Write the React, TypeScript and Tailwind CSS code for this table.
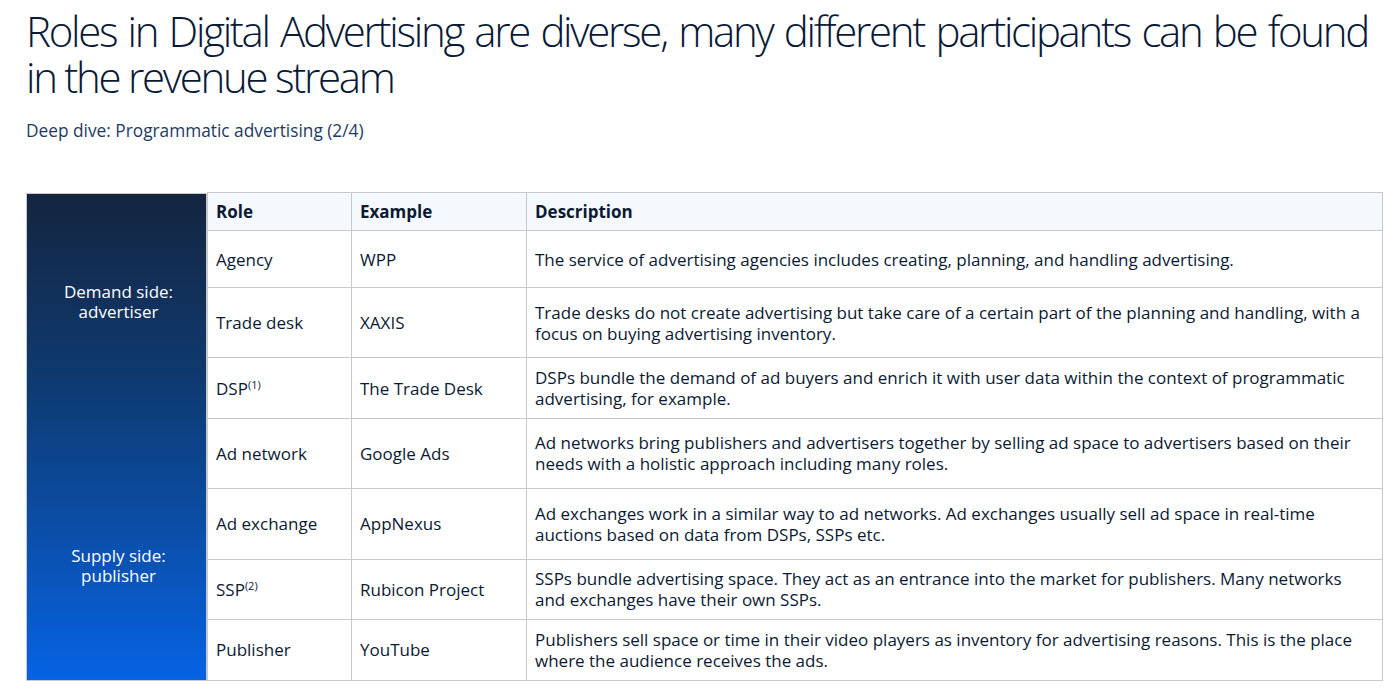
const rows = [
  { role: "Agency", sup: "", ex: "WPP", desc: "The service of advertising agencies includes creating, planning, and handling advertising.", h: "h-[57px]" },
  { role: "Trade desk", sup: "", ex: "XAXIS", desc: "Trade desks do not create advertising but take care of a certain part of the planning and handling, with a focus on buying advertising inventory.", h: "h-[70px]" },
  { role: "DSP", sup: "(1)", ex: "The Trade Desk", desc: "DSPs bundle the demand of ad buyers and enrich it with user data within the context of programmatic advertising, for example.", h: "h-[61px]" },
  { role: "Ad network", sup: "", ex: "Google Ads", desc: "Ad networks bring publishers and advertisers together by selling ad space to advertisers based on their needs with a holistic approach including many roles.", h: "h-[69px]" },
  { role: "Ad exchange", sup: "", ex: "AppNexus", desc: "Ad exchanges work in a similar way to ad networks. Ad exchanges usually sell ad space in real-time auctions based on data from DSPs, SSPs etc.", h: "h-[71px]" },
  { role: "SSP", sup: "(2)", ex: "Rubicon Project", desc: "SSPs bundle advertising space. They act as an entrance into the market for publishers. Many networks and exchanges have their own SSPs.", h: "h-[60px]" },
  { role: "Publisher", sup: "", ex: "YouTube", desc: "Publishers sell space or time in their video players as inventory for advertising reasons. This is the place where the audience receives the ads.", h: "h-[61px]" },
];

export default function App() {
  return (
    <div className="w-[1400px] h-[697px] bg-white text-[#0b1a33] font-['Open_Sans',sans-serif] overflow-hidden">
      <div className="pl-[26px] pr-[32px] pt-[8px]">
        <h1 className="text-[42px] leading-[46px] font-light tracking-[-2.3px] text-justify text-[#0a1a36]">
          Roles in Digital Advertising are diverse, many different participants can be found in the revenue stream
        </h1>
        <p className="mt-[19px] text-[17.3px] leading-[24px] text-[#1d3a63]">
          Deep dive: Programmatic advertising (2/4)
        </p>
      </div>

      <div className="flex ml-[26px] mt-[49px] w-[1357px]">
        <div className="w-[181px] shrink-0 h-[488px] mt-px pl-[4px] border border-[#c9c9c9] bg-gradient-to-b from-[#132540] via-[#0d3b73] via-40% to-[#0563e4] flex flex-col items-center text-white text-[17px] leading-[20px] text-center">
          <div className="mt-[88px] flex flex-col">
            <span>Demand side:</span>
            <span>advertiser</span>
          </div>
          <div className="mt-[224px] flex flex-col">
            <span>Supply side:</span>
            <span>publisher</span>
          </div>
        </div>
        <table className="flex-1 border-collapse text-[17px] leading-[21px]">
          <thead>
            <tr className="h-[38px] bg-[#f5f8fd] font-bold">
              <td className="w-[144px] border border-[#c9c9c9] px-[8px]">Role</td>
              <td className="w-[175px] border border-[#c9c9c9] px-[8px]">Example</td>
              <td className="border border-[#c9c9c9] px-[8px]">Description</td>
            </tr>
          </thead>
          <tbody>
            {rows.map((r) => (
              <tr key={r.role} className={r.h}>
                <td className="border border-[#c9c9c9] px-[8px]">
                  {r.role}
                  {r.sup && <sup className="text-[11px]">{r.sup}</sup>}
                </td>
                <td className="border border-[#c9c9c9] px-[8px]">{r.ex}</td>
                <td className="border border-[#c9c9c9] pl-[8px] pr-[13px]">{r.desc}</td>
              </tr>
            ))}
          </tbody>
        </table>
      </div>
    </div>
  );
}
